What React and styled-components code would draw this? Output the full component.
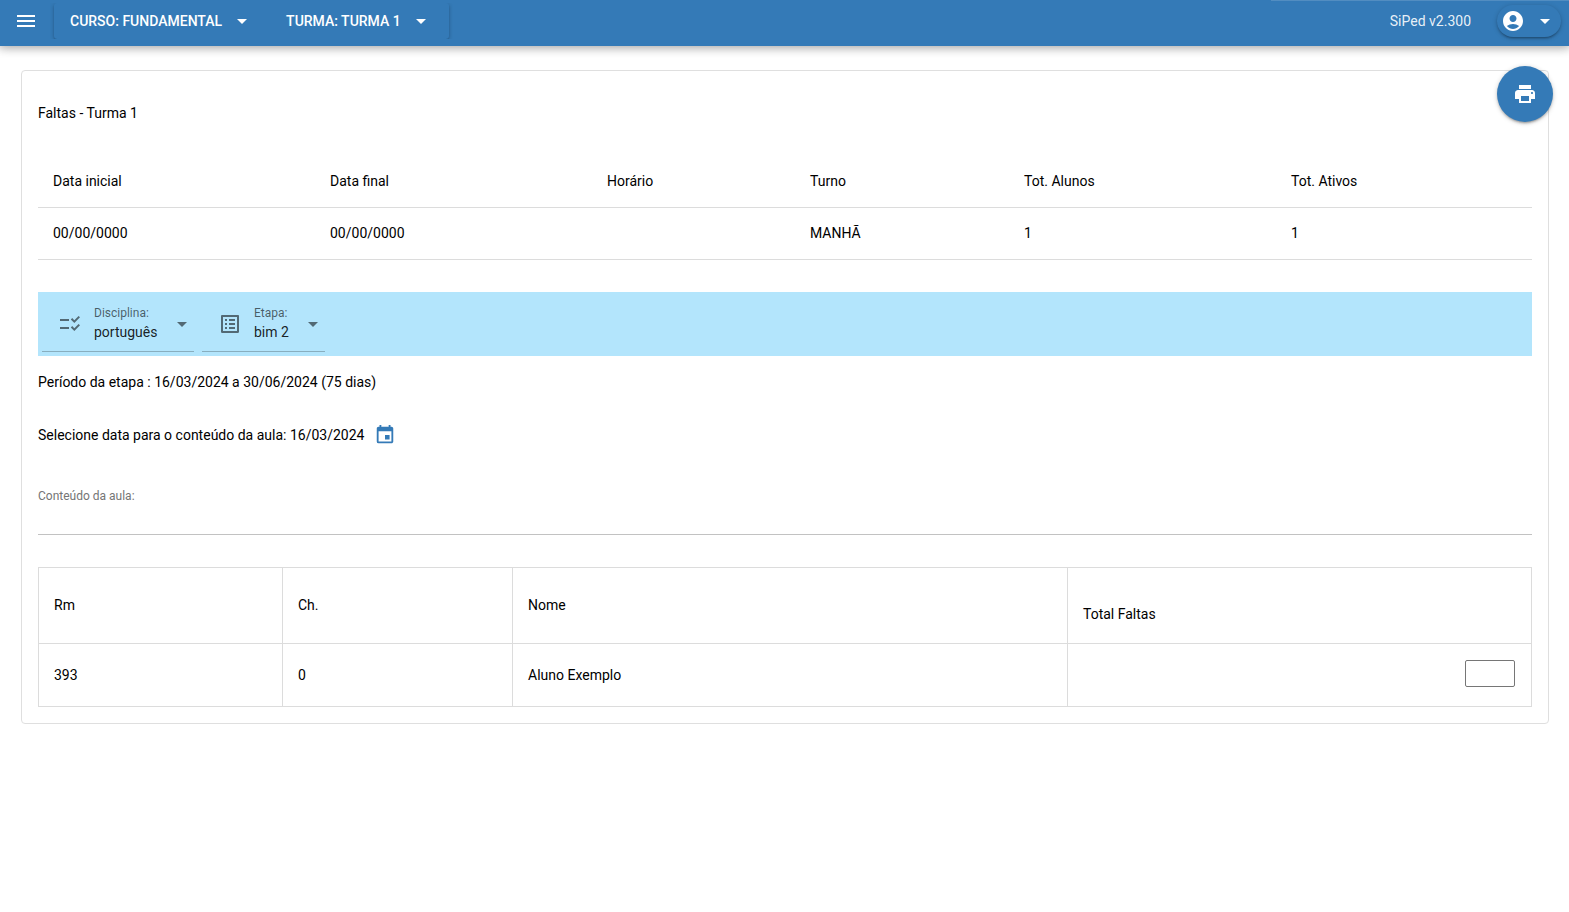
import styled, { createGlobalStyle } from "styled-components";
import {
    MdAccountCircle,
    MdArrowDropDown,
    MdChecklistRtl,
    MdEvent,
    MdListAlt,
    MdMenu,
    MdPrint,
} from "react-icons/md";

const GlobalStyle = createGlobalStyle`
    *, *::before, *::after {
        box-sizing: border-box;
    }

    body {
        margin: 0;
        background-color: #fff;
        color: #000;
        font-family: Roboto, "Liberation Sans", sans-serif;
        font-size: 14px;
        line-height: 20px;
    }

    button, input, select, textarea {
        font: inherit;
        color: inherit;
    }

    button {
        cursor: pointer;
    }

    svg {
        flex: none;
    }
`

const HeaderContainer = styled.header`
    position: sticky;
    top: 0;
    z-index: 10;
    display: flex;
    align-items: center;
    height: 46px;
    padding: 0 8px 4px 14px;
    background-color: #347ab7;
    color: #fff;
    box-shadow: 0 0 10px 2px rgba(0, 0, 0, 0.2), 0 0 10px rgba(0, 0, 0, 0.24);
`

const LoadingBar = styled.div`
    position: absolute;
    top: 0;
    right: 0;
    width: 19%;
    height: 1px;
    background-color: rgba(255, 255, 255, 0.15);
`

const IconButton = styled.button`
    display: flex;
    padding: 0;
    border: none;
    background: none;
    color: ${({ $color }) => $color || "inherit"};
`

/* only the side shadows of the group are visible */
const MenuGroup = styled.nav`
    display: flex;
    margin-left: 16px;
    border-radius: 3px;
    box-shadow: 0 1px 5px rgba(0, 0, 0, 0.2), 0 2px 2px rgba(0, 0, 0, 0.14), 0 3px 1px -2px rgba(0, 0, 0, 0.12);
    clip-path: inset(0 -4px);
`

const MenuButton = styled.button`
    display: flex;
    align-items: center;
    gap: 8px;
    height: 36px;
    padding: 0 16px;
    border: none;
    background: none;
    font-weight: 500;
    text-transform: uppercase;
`

const Version = styled.div`
    flex: 1;
    padding-right: 26px;
    text-align: right;
    color: rgba(255, 255, 255, 0.9);
`

const AccountButton = styled.button`
    display: flex;
    align-items: center;
    gap: 8px;
    height: 32px;
    padding: 0 4px;
    border: none;
    border-radius: 16px;
    background: none;
    box-shadow: 0 1px 5px rgba(0, 0, 0, 0.2), 0 2px 2px rgba(0, 0, 0, 0.14), 0 3px 1px -2px rgba(0, 0, 0, 0.12);
`

const Page = styled.main`
    position: relative;
    padding: 24px 20px 24px 21px;
`

const PrintButton = styled.button`
    position: absolute;
    top: 20px;
    right: 16px;
    display: flex;
    align-items: center;
    justify-content: center;
    width: 56px;
    height: 56px;
    border: none;
    border-radius: 50%;
    background-color: #347ab7;
    color: #fff;
    box-shadow: 0 1px 5px rgba(0, 0, 0, 0.2), 0 2px 2px rgba(0, 0, 0, 0.14), 0 3px 1px -2px rgba(0, 0, 0, 0.12);
`

const Card = styled.section`
    padding: 16px;
    border: 1px solid #dfdfdf;
    border-radius: 4px;
`

const Title = styled.h1`
    margin: 16px 0 32px;
    font-size: 14px;
    font-weight: 400;
`

const Table = styled.table`
    width: 100%;
    border-collapse: collapse;
    table-layout: fixed;

    th, td {
        padding: 15px;
        text-align: left;
        font-weight: 400;
    }
`

const InfoTable = styled(Table)`
    th, td {
        height: 52px;
        border-bottom: 1px solid #dcdcdc;
    }
`

const StudentTable = styled(Table)`
    margin-top: 32px;

    th, td {
        height: 63px;
        border: 1px solid #dcdcdc;
    }

    th {
        height: 76px;
    }

    .total {
        padding-top: 33px;
    }

    .absences {
        padding: 16px;
        text-align: right;
        vertical-align: top;
    }
`

const Filters = styled.div`
    display: flex;
    gap: 8px;
    margin-top: 32px;
    padding: 4px;
    background-color: #b3e5fc;
`

const Field = styled.div`
    display: flex;
    align-items: center;
    gap: 12px;
    height: 56px;
    padding: 1px 0 0 16px;
    border-bottom: 1px solid rgba(0, 0, 0, 0.24);
    color: rgba(0, 0, 0, 0.54);

    .control {
        display: flex;
        flex-direction: column;
        gap: 1px;
    }

    label {
        font-size: 12px;
        line-height: 16px;
        color: rgba(0, 0, 0, 0.6);
    }

    select {
        height: 20px;
        padding: 0;
        border: none;
        outline: none;
        appearance: none;
        background: none;
        color: rgba(0, 0, 0, 0.87);
    }
`

const Period = styled.p`
    margin: 16px 0 0;
`

const DateRow = styled.div`
    display: flex;
    align-items: center;
    gap: 10px;
    margin-top: 32px;
`

const ContentField = styled.div`
    display: flex;
    flex-direction: column;
    margin-top: 42px;

    label {
        font-size: 12px;
        line-height: 16px;
        color: #757575;
    }

    input {
        height: 31px;
        padding: 0;
        border: none;
        border-bottom: 1px solid #c2c2c2;
        outline: none;
        background: none;
    }
`

const AbsenceInput = styled.input`
    display: inline-block;
    width: 50px;
    height: 27px;
    border: 1px solid #767676;
    border-radius: 2px;
    background: #fff;
    vertical-align: top;
`

const infoColumns = [
    { name: "Data inicial", value: "00/00/0000", width: 277 },
    { name: "Data final", value: "00/00/0000", width: 277 },
    { name: "Horário", value: "", width: 203 },
    { name: "Turno", value: "MANHÃ", width: 214 },
    { name: "Tot. Alunos", value: "1", width: 267 },
    { name: "Tot. Ativos", value: "1", width: 256 },
];

const students = [{ rm: 393, ch: 0, name: "Aluno Exemplo" }];

const Columns = ({ widths }) => {
    const total = widths.reduce((sum, width) => sum + width, 0);

    return (
        <colgroup>
            {widths.map((width, i) => (
                <col key={i} style={{ width: `${(width / total) * 100}%` }} />
            ))}
        </colgroup>
    )
}

const Header = () => {
    return (
        <HeaderContainer>
            <LoadingBar />
            <IconButton type="button" aria-label="Menu">
                <MdMenu size={24} />
            </IconButton>
            <MenuGroup>
                <MenuButton type="button">
                    Curso: Fundamental
                    <MdArrowDropDown size={24} />
                </MenuButton>
                <MenuButton type="button">
                    Turma: Turma 1
                    <MdArrowDropDown size={24} />
                </MenuButton>
            </MenuGroup>
            <Version>SiPed v2.300</Version>
            <AccountButton type="button" aria-label="Conta">
                <MdAccountCircle size={24} />
                <MdArrowDropDown size={24} />
            </AccountButton>
        </HeaderContainer>
    )
}

const SelectField = ({ id, label, icon: Icon, options }) => {
    return (
        <Field>
            <Icon size={24} />
            <div className="control">
                <label htmlFor={id}>{label}</label>
                <select id={id}>
                    {options.map((option) => (
                        <option key={option}>{option}</option>
                    ))}
                </select>
            </div>
            <MdArrowDropDown size={24} />
        </Field>
    )
}

const App = () => {
    return (
        <>
            <GlobalStyle />
            <Header />
            <Page>
                <Card>
                    <Title>Faltas - Turma 1</Title>

                    <InfoTable>
                        <Columns widths={infoColumns.map((column) => column.width)} />
                        <thead>
                            <tr>
                                {infoColumns.map((column) => (
                                    <th key={column.name}>{column.name}</th>
                                ))}
                            </tr>
                        </thead>
                        <tbody>
                            <tr>
                                {infoColumns.map((column) => (
                                    <td key={column.name}>{column.value}</td>
                                ))}
                            </tr>
                        </tbody>
                    </InfoTable>

                    <Filters>
                        <SelectField id="disciplina" label="Disciplina:" icon={MdChecklistRtl} options={["português"]} />
                        <SelectField id="etapa" label="Etapa:" icon={MdListAlt} options={["bim 2"]} />
                    </Filters>

                    <Period>Período da etapa : 16/03/2024 a 30/06/2024 (75 dias)</Period>

                    <DateRow>
                        <span>Selecione data para o conteúdo da aula: 16/03/2024</span>
                        <IconButton type="button" $color="#347ab7" aria-label="Selecionar data">
                            <MdEvent size={22} />
                        </IconButton>
                    </DateRow>

                    <ContentField>
                        <label htmlFor="conteudo">Conteúdo da aula:</label>
                        <input id="conteudo" type="text" />
                    </ContentField>

                    <StudentTable>
                        <Columns widths={[244, 230, 555, 464]} />
                        <thead>
                            <tr>
                                <th>Rm</th>
                                <th>Ch.</th>
                                <th>Nome</th>
                                <th className="total">Total Faltas</th>
                            </tr>
                        </thead>
                        <tbody>
                            {students.map((student) => (
                                <tr key={student.rm}>
                                    <td>{student.rm}</td>
                                    <td>{student.ch}</td>
                                    <td>{student.name}</td>
                                    <td className="absences">
                                        <AbsenceInput type="text" aria-label={`Faltas de ${student.name}`} />
                                    </td>
                                </tr>
                            ))}
                        </tbody>
                    </StudentTable>
                </Card>
                <PrintButton type="button" aria-label="Imprimir">
                    <MdPrint size={24} />
                </PrintButton>
            </Page>
        </>
    )
}
export default App;
